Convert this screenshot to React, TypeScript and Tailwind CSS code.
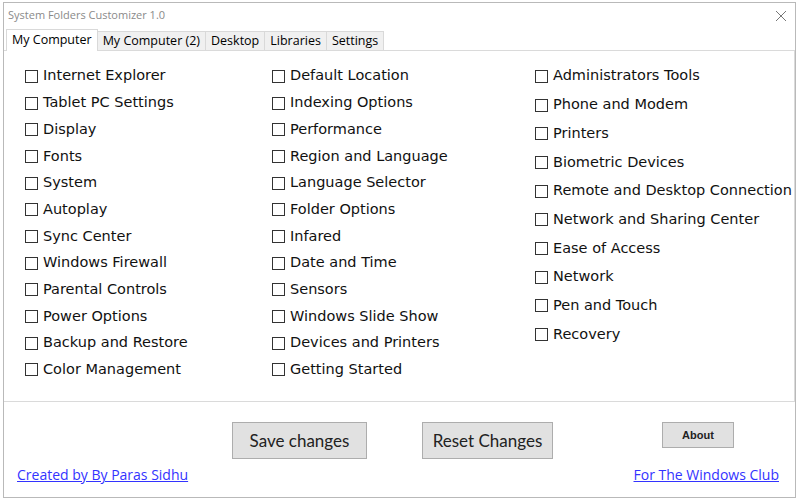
const col1 = [
  'Internet Explorer',
  'Tablet PC Settings',
  'Display',
  'Fonts',
  'System',
  'Autoplay',
  'Sync Center',
  'Windows Firewall',
  'Parental Controls',
  'Power Options',
  'Backup and Restore',
  'Color Management',
]

const col2 = [
  'Default Location',
  'Indexing Options',
  'Performance',
  'Region and Language',
  'Language Selector',
  'Folder Options',
  'Infared',
  'Date and Time',
  'Sensors',
  'Windows Slide Show',
  'Devices and Printers',
  'Getting Started',
]

const col3 = [
  'Administrators Tools',
  'Phone and Modem',
  'Printers',
  'Biometric Devices',
  'Remote and Desktop Connection',
  'Network and Sharing Center',
  'Ease of Access',
  'Network',
  'Pen and Touch',
  'Recovery',
]

const tabs = ['My Computer (2)', 'Desktop', 'Libraries', 'Settings']

function Check({ label, tall }: { label: string; tall?: boolean }) {
  return (
    <div className={`flex items-center gap-[5px] ${tall ? 'h-[28.7px]' : 'h-[26.7px]'}`}>
      <span className="w-[13px] h-[13px] border border-[#333] bg-white shrink-0" />
      <span className="text-[14.5px] text-[#111] whitespace-nowrap" style={{ fontFamily: '"DejaVu Sans", sans-serif' }}>
        {label}
      </span>
    </div>
  )
}

export default function App() {
  return (
    <div className="w-[800px] h-[501px] bg-white pt-[2px] pl-[3px]" style={{ fontFamily: '"Liberation Sans", sans-serif' }}>
      <div className="w-[793px] h-[496px] border border-[#b9b9b9] bg-white flex flex-col">
        <div className="h-[26px] flex items-center justify-between pl-[4px] pr-[8px]">
          <span className="text-[11px] text-[#8a8a8a] -mt-[2px]" style={{ fontFamily: '"Open Sans", sans-serif' }}>
            System Folders Customizer 1.0
          </span>
          <svg width="12" height="12" viewBox="0 0 12 12">
            <path d="M1 1L11 11M11 1L1 11" stroke="#777" strokeWidth="1" />
          </svg>
        </div>
        <div className="flex items-end h-[21px] pl-[2px] text-[12.5px] text-black whitespace-nowrap" style={{ fontFamily: '"Open Sans", sans-serif' }}>
          <div className="h-[22px] px-[5px] flex items-center bg-white border border-b-0 border-[#d9d9d9] relative top-[1px] z-10">
            My Computer
          </div>
          {tabs.map((t) => (
            <div key={t} className="h-[19px] px-[5px] flex items-center bg-[#f0f0f0] border border-b-0 border-l-0 border-[#d9d9d9]">
              {t}
            </div>
          ))}
        </div>
        <div className="h-[352px] border-t border-b border-r border-[#dadada] flex pt-[12px] pl-[21px]">
          <div className="w-[247px] flex flex-col">
            {col1.map((l) => (
              <Check key={l} label={l} />
            ))}
          </div>
          <div className="w-[263px] flex flex-col">
            {col2.map((l) => (
              <Check key={l} label={l} />
            ))}
          </div>
          <div className="flex flex-col -mt-[1px]">
            {col3.map((l) => (
              <Check key={l} label={l} tall />
            ))}
          </div>
        </div>
        <div className="flex-1 flex flex-col">
          <div className="flex items-start pt-[20px] pl-[228px]" style={{ fontFamily: 'Lato, sans-serif' }}>
            <button className="w-[135px] h-[37px] bg-[#e1e1e1] border border-[#adadad] text-[17px] text-[#222]">
              Save changes
            </button>
            <button className="ml-[55px] w-[131px] h-[37px] bg-[#e1e1e1] border border-[#adadad] text-[17px] text-[#222]">
              Reset Changes
            </button>
            <button className="ml-[109px] w-[72px] h-[26px] bg-[#e1e1e1] border border-[#adadad] text-[11px] font-bold text-[#222]" style={{ fontFamily: '"Liberation Sans", sans-serif' }}>
              About
            </button>
          </div>
          <div className="flex justify-between pl-[13px] pr-[16px] mt-[5px] text-[14px] text-[#3333ff] underline" style={{ fontFamily: '"Open Sans", sans-serif' }}>
            <span>Created by By Paras Sidhu</span>
            <span>For The Windows Club</span>
          </div>
        </div>
      </div>
    </div>
  )
}
